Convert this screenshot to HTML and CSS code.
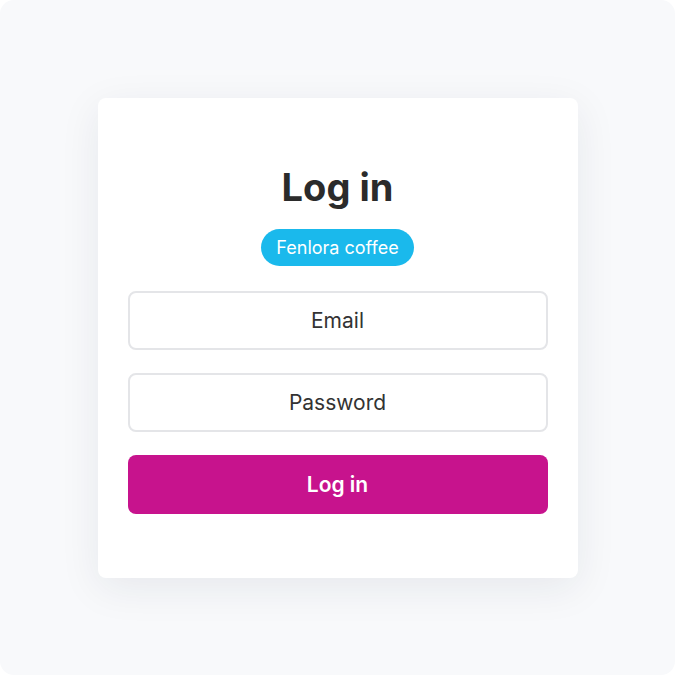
FILE: index.html
```html
<!DOCTYPE html>
<html lang="en">
<head>
    <meta charset="UTF-8">
    <meta name="viewport" content="width=device-width, initial-scale=1.0">
    <title>Log in</title>
    <link rel="stylesheet" href="styles.css">
</head>
<body>
    <main class="page">
        <section class="card">
            <h1 class="title">Log in</h1>
            <span class="badge">Fenlora coffee</span>
            <form class="login-form">
                <input class="field" type="email" placeholder="Email">
                <input class="field" type="password" placeholder="Password">
                <button class="submit" type="submit">Log in</button>
            </form>
        </section>
    </main>
</body>
</html>
```

FILE: styles.css
```css
html, body {
    margin: 0;
    padding: 0;
    background: #ffffff;
}
body {
    font-family: Inter, "Noto Sans", sans-serif;
}
.page {
    width: 675px;
    height: 675px;
    box-sizing: border-box;
    background: #f8f9fb;
    border-radius: 14px;
    display: flex;
    align-items: center;
    justify-content: center;
}
.card {
    width: 480px;
    height: 480px;
    box-sizing: border-box;
    background: #ffffff;
    border-radius: 8px;
    padding: 65px 30px 0;
    box-shadow: 0 10px 40px rgba(30, 40, 60, 0.08);
    display: flex;
    flex-direction: column;
    align-items: center;
}
.title {
    margin: 0;
    font-size: 38px;
    line-height: 48px;
    font-weight: 700;
    color: #2b2b2b;
}
.badge {
    margin-top: 18px;
    height: 37px;
    line-height: 37px;
    padding: 0 15px;
    border-radius: 19px;
    background: #1ab9ec;
    color: #ffffff;
    font-size: 18px;
}
.login-form {
    margin-top: 25px;
    width: 100%;
    display: flex;
    flex-direction: column;
    gap: 23px;
}
.field {
    height: 59px;
    box-sizing: border-box;
    border: 2px solid #e4e5e8;
    border-radius: 8px;
    background: #ffffff;
    font-family: inherit;
    font-size: 21px;
    text-align: center;
    color: #333;
}
.field::placeholder {
    color: #333;
}
.submit {
    height: 59px;
    border: none;
    border-radius: 8px;
    background: #c7138d;
    color: #ffffff;
    font-family: inherit;
    font-size: 21px;
    font-weight: 600;
}
```
